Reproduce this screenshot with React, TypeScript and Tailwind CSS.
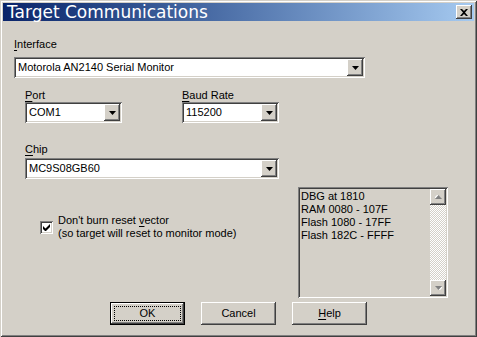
import React from "react";

const raised =
  "shadow-[inset_-1px_-1px_#404040,inset_1px_1px_#ffffff,inset_-2px_-2px_#808080,inset_2px_2px_#d4d0c8]";
const sunken =
  "shadow-[inset_1px_1px_#808080,inset_-1px_-1px_#ffffff,inset_2px_2px_#404040,inset_-2px_-2px_#d4d0c8]";

const Arrow = ({ up = false, disabled = false }: { up?: boolean; disabled?: boolean }) => (
  <svg width="7" height="4" viewBox="0 0 7 4" className={up ? "rotate-180" : ""}>
    {disabled && <path d="M1 1h7L4.5 4.5z" fill="#ffffff" />}
    <path d="M0 0h7L3.5 4z" fill={disabled ? "#808080" : "#000000"} />
  </svg>
);

const Combo = ({ value, width }: { value: string; width: string }) => (
  <div className={`${width} h-[21px] bg-white ${sunken} flex items-center p-[2px]`}>
    <span className="flex-1 pl-[2px] leading-[13px]">{value}</span>
    <div className={`w-[16px] h-[17px] bg-[#d4d0c8] ${raised} flex items-center justify-center`}>
      <Arrow />
    </div>
  </div>
);

const Label = ({ k, rest }: { k: string; rest: string }) => (
  <div className="leading-[13px] h-[13px]">
    <span className="underline underline-offset-[2px]">{k}</span>
    {rest}
  </div>
);

const Button = ({ children, isDefault = false }: { children: React.ReactNode; isDefault?: boolean }) => (
  <div
    className={`w-[75px] h-[23px] flex items-center justify-center ${
      isDefault ? "border border-black" : ""
    }`}
  >
    <div className={`w-full h-full bg-[#d4d0c8] ${raised} flex items-center justify-center p-[4px]`}>
      <div
        className={`w-full h-full flex items-center justify-center leading-[13px] ${
          isDefault ? "outline outline-1 outline-dotted outline-black" : ""
        }`}
      >
        {children}
      </div>
    </div>
  </div>
);

export default function App() {
  return (
    <div
      className={`w-[477px] h-[337px] bg-[#d4d0c8] p-[3px] text-black text-[11px] font-['Liberation_Sans',Arial,sans-serif] shadow-[inset_1px_1px_#d4d0c8,inset_-1px_-1px_#404040,inset_2px_2px_#ffffff,inset_-2px_-2px_#808080] flex flex-col`}
    >
      {/* title bar */}
      <div className="h-[18px] bg-gradient-to-r from-[#0a246a] to-[#a6caf0] flex items-center justify-between">
        <span className="pl-[4px] text-white text-[17px] leading-[18px] font-['DejaVu_Sans',Verdana,sans-serif]">
          Target Communications
        </span>
        <div className={`w-[16px] h-[14px] mr-[2px] bg-[#d4d0c8] ${raised} flex items-center justify-center`}>
          <svg width="8" height="7" viewBox="0 0 8 7">
            <path d="M0 0h2l2 2 2-2h2L5 3.5 8 7H6L4 5 2 7H0l3-3.5z" fill="#000" />
          </svg>
        </div>
      </div>

      {/* body */}
      <div className="pl-[11px] pt-[17px] flex flex-col">
        <Label k="I" rest="nterface" />
        <div className="mt-[6px]">
          <Combo value="Motorola AN2140 Serial Monitor" width="w-[351px]" />
        </div>

        <div className="flex pl-[11px] mt-[11px] gap-[60px]">
          <div className="flex flex-col">
            <Label k="P" rest="ort" />
            <Combo value="COM1" width="w-[97px]" />
          </div>
          <div className="flex flex-col">
            <Label k="B" rest="aud Rate" />
            <Combo value="115200" width="w-[97px]" />
          </div>
        </div>

        <div className="flex flex-col pl-[11px] mt-[20px]">
          <Label k="C" rest="hip" />
          <div className="mt-[2px]">
            <Combo value="MC9S08GB60" width="w-[254px]" />
          </div>
        </div>

        <div className="flex mt-[8px]">
          <div className="flex-1 pl-[26px] pt-[27px]">
            <div className="flex items-center gap-[5px]">
              <div className={`w-[13px] h-[13px] bg-white ${sunken} flex items-center justify-center`}>
                <svg width="7" height="7" viewBox="0 0 7 7">
                  <path d="M0 2v3l2 2h1l4-4V0L2.5 4.5z" fill="#000" />
                </svg>
              </div>
              <div className="leading-[13px]">
                <div>
                  Don't burn reset <span className="underline underline-offset-[2px]">v</span>ector
                </div>
                <div>(so target will reset to monitor mode)</div>
              </div>
            </div>
          </div>
          <div className={`w-[150px] h-[111px] mr-[26px] ${sunken} p-[2px] flex`}>
            <div className="flex-1 pl-[1px] pt-[1px] leading-[13px]">
              <div>DBG at 1810</div>
              <div>RAM 0080 - 107F</div>
              <div>Flash 1080 - 17FF</div>
              <div>Flash 182C - FFFF</div>
            </div>
            <div className="w-[16px] flex flex-col">
              <div className={`h-[16px] bg-[#d4d0c8] ${raised} flex items-center justify-center`}>
                <Arrow up disabled />
              </div>
              <div className="flex-1 bg-[repeating-conic-gradient(#ffffff_0_25%,#d4d0c8_0_50%)] bg-size-[2px_2px]" />
              <div className={`h-[16px] bg-[#d4d0c8] ${raised} flex items-center justify-center`}>
                <Arrow disabled />
              </div>
            </div>
          </div>
        </div>

        <div className="flex gap-[16px] pl-[96px] mt-[4px]">
          <Button isDefault>OK</Button>
          <Button>Cancel</Button>
          <Button>
            <span>
              <span className="underline underline-offset-[2px]">H</span>elp
            </span>
          </Button>
        </div>
      </div>
    </div>
  );
}
